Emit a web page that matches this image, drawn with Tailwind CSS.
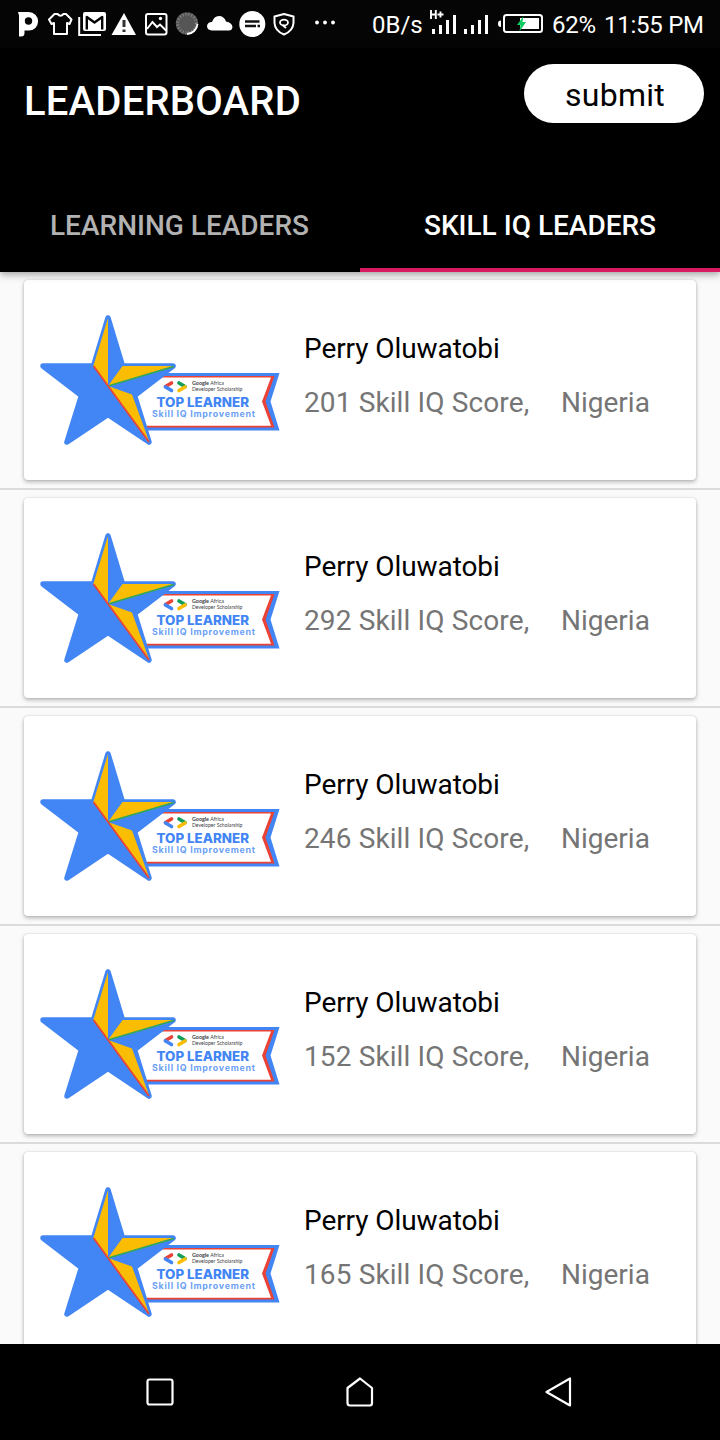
<!DOCTYPE html>
<html lang="en">
<head>
<meta charset="utf-8">
<title>Leaderboard</title>
<script src="https://cdn.jsdelivr.net/npm/@tailwindcss/browser@4"></script>
</head>
<body class="w-[720px] h-[1440px] overflow-hidden bg-[#fafafa] font-[Roboto,sans-serif] flex flex-col">
<svg class="hidden">
  <symbol id="badge" viewBox="40 310 240 140">
    <path d="M137 373H279.500L270.500 401.500L279.500 430.500H137Z" fill="#4285f4"/>
    <path d="M137 376H274.500L265.500 401.500L274.500 427.500H137Z" fill="#ea4335"/>
    <path d="M137 377.500H271L262 401.500L271 425.700H137Z" fill="#fff"/>
    <path d="M108 318L93.500 366H43L81.500 395.500L67 442L108 414.500L149 442L134.500 395.500L173 366H122.500Z" fill="#4285f4" stroke="#4285f4" stroke-width="5.500" stroke-linejoin="round"/>
    <path d="M108 318V386L93.300 366ZM122.500 366H173L108 386ZM108 386L132 394.500L149 441Z" fill="#fbbc04"/>
    <path d="M108 386L174 366.500" stroke="#34a853" stroke-width="1.700"/>
    <path d="M93.500 366L149 442" stroke="#ea4335" stroke-width="1.700"/>
    <g fill="none" stroke-width="3.600" stroke-linecap="round">
      <path d="M171.500 383L165.500 386.500" stroke="#ea4335"/>
      <path d="M165.500 387L171.500 390.500" stroke="#4285f4"/>
      <path d="M179 383L185 386.500" stroke="#0f9d58"/>
      <path d="M185 387L179 390.500" stroke="#fbbc04"/>
    </g>
    <g font-family="Lato, sans-serif" fill="#3c4043" font-size="5.300">
      <text x="192" y="385" textLength="32" lengthAdjust="spacingAndGlyphs"><tspan font-weight="700">Google</tspan> Africa</text>
      <text x="192" y="391.300" textLength="50.500" lengthAdjust="spacingAndGlyphs">Developer Scholarship</text>
    </g>
    <g font-family="Inter, sans-serif" fill="#4285f4">
      <text x="156.500" y="407" font-size="12.600" font-weight="800" textLength="92.500" lengthAdjust="spacingAndGlyphs">TOP LEARNER</text>
      <text x="152" y="416.800" font-size="8.900" font-weight="700" fill-opacity=".8" textLength="103">Skill IQ Improvement</text>
    </g>
  </symbol>
</svg>

<!-- Status bar -->
<div class="h-12 shrink-0 bg-[#050505] text-white flex items-center">
  <svg class="w-[362px] h-12 shrink-0" viewBox="0 0 362 48" fill="none" stroke="#fff" stroke-width="2">
    <path d="M18 12H28.800A9.300 9.300 0 0 1 28.800 30.600H24.500V33Q24.500 36.500 21 36.500H19V15.500Z" fill="#fff" stroke="none"/>
    <circle cx="28.500" cy="21" r="3.700" fill="#050505" stroke="none"/>
    <path d="M54.500 14L49 19.500L51.500 24L54 23V34H67V23L69.500 24L71.500 19.500L66 14H63.500Q60.500 17.500 57.500 14Z" stroke-linejoin="round"/>
    <path d="M79.200 17V35H101"/>
    <rect x="83" y="12" width="23" height="19" rx="2" fill="#fff" stroke="none"/>
    <path d="M86.800 29.500V17L94.500 22.500L102.200 17V29.500" stroke="#050505" stroke-width="2.400" stroke-linejoin="round"/>
    <path d="M124 13L136 35H111.500Z" fill="#fff" stroke="none"/>
    <path d="M124 20V27M124 29.500V32" stroke="#333" stroke-width="3"/>
    <rect x="146" y="14" width="20.500" height="20.500" rx="2"/>
    <path d="M147 29L152.500 22L157 27L160 24.500L166 30.500"/>
    <circle cx="160.500" cy="18.500" r="1.700" fill="#fff" stroke="none"/>
    <circle cx="187" cy="23.500" r="11.200" fill="#555" stroke="none"/>
    <circle cx="187" cy="23.500" r="9.300" stroke="#888" stroke-width="3" stroke-dasharray="1 2"/>
    <path d="M187 34A11 11 0 0 0 197.500 24" stroke-width="1.800"/>
    <path d="M212 30.500Q207 30 207 26Q207.500 22 212 22Q214 16 219 16Q224 16 226 21.500Q232 22.500 232.500 27Q232 30.500 229 30.500Z" fill="#fff" stroke="none"/>
    <circle cx="252.300" cy="24" r="13" fill="#fff" stroke="none"/>
    <path d="M245 21.500H259.500M245 26H256M257.500 26H260" stroke="#111" stroke-width="2.600"/>
    <path d="M284 14L293.500 16.500V23Q293 31 284 34.500Q275 31 274.500 23V16.500Z" stroke-linejoin="round"/>
    <ellipse cx="284" cy="22.500" rx="4" ry="2.900" stroke-width="1.800"/>
    <path d="M282.500 25L286 28" stroke-width="1.800"/>
    <g fill="#fff" stroke="none"><circle cx="317" cy="22.500" r="1.900"/><circle cx="325" cy="22.500" r="1.900"/><circle cx="333" cy="22.500" r="1.900"/></g>
  </svg>
  <span class="w-[66px] pl-[10px] shrink-0 text-[24px] leading-none pt-[2px] whitespace-nowrap">0B/s</span>
  <svg class="w-[124px] h-12 shrink-0" viewBox="428 0 124 48" fill="none" stroke="#fff" stroke-width="3">
    <path d="M431 10V19M435.800 10V19M431 14.500H435.800M437.500 14.500H443.500M440.500 11.500V17.500" stroke-width="1.900"/>
    <path d="M433.500 29V34M440.500 25V34M447.500 20V34M454.500 15V34M465.500 29V34M472.500 25V34M479.500 20V34M486.500 15V34"/>
    <path d="M501 20.500Q498 20.500 498 23.700Q498 27 501 27Z" fill="#fff" stroke="none"/>
    <rect x="504" y="15" width="38" height="17" rx="2.500" stroke-width="2"/>
    <path d="M520 18H539V29H520Z" fill="#fff" stroke="none"/>
    <path d="M523.500 16L517 25H520.500L519.500 31.500L526 22H522.500Z" fill="#0ccb60" stroke="none"/>
  </svg>
  <span class="w-[52px] shrink-0 text-[24px] leading-none pt-[2px] tracking-[-0.3px]">62%</span>
  <span class="text-[24px] leading-none pt-[2px] whitespace-nowrap tracking-[-0.25px]">11:55 PM</span>
</div>

<!-- App bar -->
<header class="relative z-10 h-[224px] shrink-0 bg-black text-white flex flex-col justify-between shadow-[0_2px_8px_rgba(0,0,0,0.4)]">
  <div class="flex justify-between pl-6 pr-4 pt-4">
    <h1 class="text-[40px] leading-[48px] font-medium pt-[14px] tracking-[0.2px]">LEADERBOARD</h1>
    <button class="w-[180px] h-[59px] rounded-full bg-white text-black text-[32px] leading-[59px] pl-[2px] pt-[2px] tracking-[0.3px]">submit</button>
  </div>
  <nav class="grid grid-cols-2 h-24 text-[28px] font-medium text-center leading-[96px]">
    <div class="text-[#b2b2b2] pt-[2px] pr-px"><span>LEARNING LEADERS</span></div>
    <div class="h-24 border-b-4 border-[#d81b60] pt-[2px]"><span>SKILL IQ LEADERS</span></div>
  </nav>
</header>

<main id="list" class="h-[1072px] shrink-0 overflow-hidden"></main>

<!-- Navigation bar -->
<footer class="h-24 shrink-0 bg-black">
  <svg class="w-[720px] h-24" viewBox="0 1344 720 96" fill="none" stroke="#fff" stroke-width="2.200" stroke-linejoin="round">
    <rect x="147.500" y="1379.500" width="25" height="25" rx="2"/>
    <path d="M360 1378.500L372 1388V1403Q372 1405.500 370 1405.500H350Q347.500 1405.500 347.500 1403V1388Z"/>
    <path d="M570 1378.500V1405.500L546.500 1392Z"/>
  </svg>
</footer>

<script>
document.getElementById('list').innerHTML = [201, 292, 246, 152, 165].map(score => `
  <div class="h-[218px] px-6 py-2 border-b-2 border-[#dbdbdb]">
    <article class="h-[200px] rounded-[4px] bg-white shadow-[0_2px_4px_rgba(0,0,0,0.28),0_0_2px_rgba(0,0,0,0.14)] flex pl-4 pt-[30px]">
      <svg class="w-[240px] h-[140px] shrink-0"><use href="#badge"/></svg>
      <div class="pl-6 pt-[22px] text-[28px] leading-[34px] whitespace-nowrap">
        <p class="text-black tracking-[-0.08px]">Perry Oluwatobi</p>
        <div class="mt-5 flex text-[#757575]"><span class="w-[257px] tracking-[0.12px]">${score} Skill IQ Score,</span><span>Nigeria</span></div>
      </div>
    </article>
  </div>`).join('');
</script>
</body>
</html>
